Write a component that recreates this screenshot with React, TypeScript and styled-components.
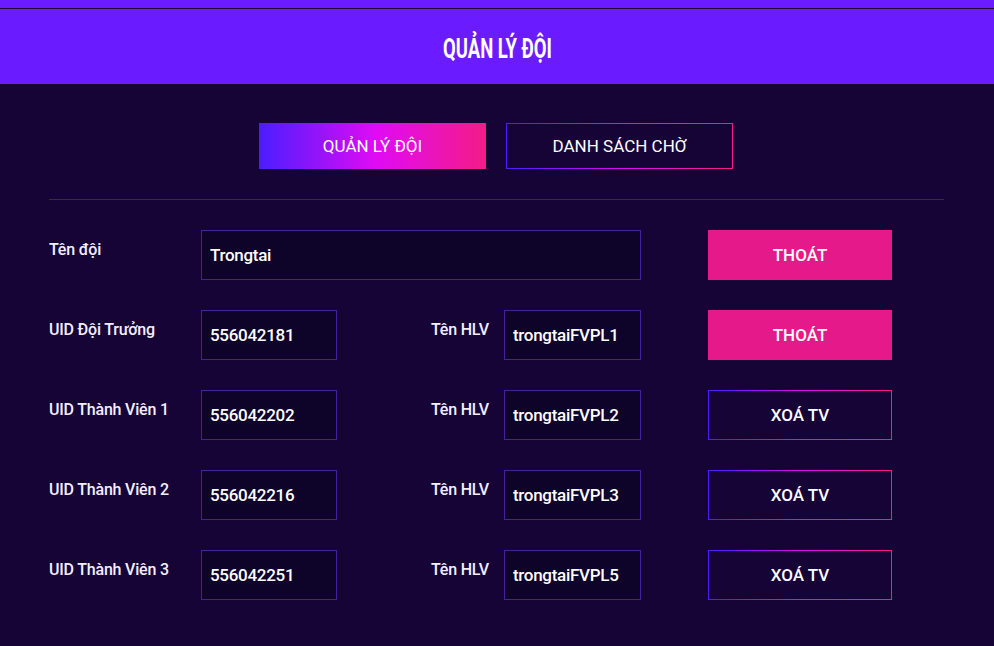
import React from "react";
import styled, { createGlobalStyle } from "styled-components";

const GlobalStyle = createGlobalStyle`
  html, body {
    margin: 0;
    padding: 0;
    background: #160437;
  }
  * {
    box-sizing: border-box;
  }
`;

const brandGradient = "linear-gradient(90deg, #4a1dff 0%, #e00bf4 52%, #f41c86 100%)";

interface Member {
    label: string;
    uid: string;
    coach: string;
    action: "leave" | "remove";
}

const members: Member[] = [
    { label: "UID Đội Trưởng", uid: "556042181", coach: "trongtaiFVPL1", action: "leave" },
    { label: "UID Thành Viên 1", uid: "556042202", coach: "trongtaiFVPL2", action: "remove" },
    { label: "UID Thành Viên 2", uid: "556042216", coach: "trongtaiFVPL3", action: "remove" },
    { label: "UID Thành Viên 3", uid: "556042251", coach: "trongtaiFVPL5", action: "remove" },
];

const App: React.FC = () => {
    return (
        <Page>
            <GlobalStyle />
            <Header>
                <Title>QUẢN LÝ ĐỘI</Title>
            </Header>

            <Content>
                <Tabs>
                    <Tab $active>QUẢN LÝ ĐỘI</Tab>
                    <Tab>DANH SÁCH CHỜ</Tab>
                </Tabs>

                <Divider />

                <Form>
                    <Row>
                        <Label>Tên đội</Label>
                        <Field readOnly value="Trongtai" />
                        <ActionButton $variant="leave">THOÁT</ActionButton>
                    </Row>

                    {members.map((m) => (
                        <Row key={m.uid}>
                            <Label>{m.label}</Label>
                            <Middle>
                                <SmallField readOnly value={m.uid} />
                                <CoachLabel>Tên HLV</CoachLabel>
                                <SmallField readOnly value={m.coach} $wide />
                            </Middle>
                            <ActionButton $variant={m.action}>
                                {m.action === "leave" ? "THOÁT" : "XOÁ TV"}
                            </ActionButton>
                        </Row>
                    ))}
                </Form>
            </Content>
        </Page>
    );
};

export default App;

const Page = styled.div`
  min-height: 100vh;
  background: #160437;
  color: #ffffff;
  font-family: Roboto, "Noto Sans", "Liberation Sans", sans-serif;
`;

const Header = styled.header`
  height: 84px;
  padding-top: 9px;
  display: flex;
  align-items: center;
  justify-content: center;
  background: linear-gradient(
    to bottom,
    #6a1bff 0,
    #6a1bff 8px,
    #1c0a2e 8px,
    #1c0a2e 9px,
    #6a1bff 9px
  );
`;

const Title = styled.h1`
  margin: 4px 0 0;
  font-size: 28px;
  font-weight: 700;
  line-height: 1;
  color: #ffffff;
  transform: scaleX(0.66);
`;

const Content = styled.main`
  padding: 39px 51px 40px 49px;
`;

const Tabs = styled.div`
  display: flex;
  justify-content: center;
  gap: 20px;
`;

const Tab = styled.button<{ $active?: boolean }>`
  width: 227px;
  height: 46px;
  padding: 0;
  font-family: inherit;
  font-size: 17px;
  font-weight: 400;
  color: #ffffff;
  cursor: pointer;
  border: 1px solid transparent;
  background: ${(p) =>
        p.$active
            ? `${brandGradient} border-box`
            : `linear-gradient(#160437, #160437) padding-box, ${brandGradient} border-box`};
`;

const Divider = styled.hr`
  margin: 30px -1px 0 0;
  border: 0;
  height: 1px;
  background: #3a1a96;
`;

const Form = styled.div`
  margin-top: 30px;
  display: flex;
  flex-direction: column;
  gap: 30px;
`;

const Row = styled.div`
  display: grid;
  grid-template-columns: 152px 440px 251px;
  align-items: start;
`;

const Label = styled.div`
  padding-top: 10px;
  font-size: 16px;
  font-weight: 500;
  line-height: 20px;
  letter-spacing: -0.2px;
  color: #f4efff;
`;

const Middle = styled.div`
  display: flex;
  align-items: flex-start;
`;

const CoachLabel = styled(Label)`
  margin-left: auto;
  margin-right: 15px;
`;

const Field = styled.input`
  width: 100%;
  height: 50px;
  padding: 0 8px;
  font-family: inherit;
  font-size: 17px;
  font-weight: 500;
  letter-spacing: -0.3px;
  color: #ffffff;
  background: #0e0329;
  border: 1px solid #45209f;
  outline: none;
`;

const SmallField = styled(Field)<{ $wide?: boolean }>`
  width: ${(p) => (p.$wide ? "137px" : "136px")};
`;

const ActionButton = styled.button<{ $variant: "leave" | "remove" }>`
  justify-self: end;
  width: 184px;
  height: 50px;
  padding: 0;
  font-family: inherit;
  font-size: 17px;
  font-weight: 500;
  color: #ffffff;
  cursor: pointer;
  border: 1px solid transparent;
  background: ${(p) =>
        p.$variant === "leave"
            ? "#e5198a"
            : `linear-gradient(#160437, #160437) padding-box, ${brandGradient} border-box`};
`;
